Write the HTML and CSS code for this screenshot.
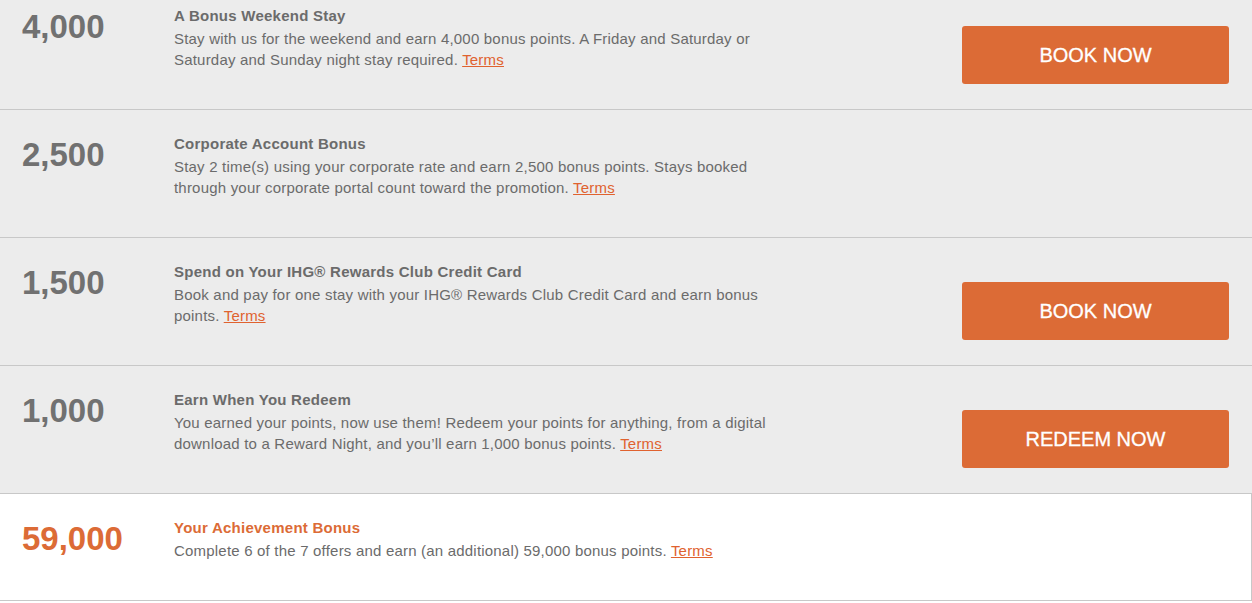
FILE: index.html
```html
<!DOCTYPE html>
<html>
<head>
<meta charset="utf-8">
<link rel="stylesheet" href="styles.css">
</head>
<body>
<div class="list">
  <div class="row">
    <div class="points">4,000</div>
    <div class="info">
      <div class="title">A Bonus Weekend Stay</div>
      <div class="desc">Stay with us for the weekend and earn 4,000 bonus points. A Friday and Saturday or Saturday and Sunday night stay required. <a href="#" class="terms">Terms</a></div>
    </div>
    <div class="action"><a href="#" class="btn">BOOK NOW</a></div>
  </div>
  <div class="row">
    <div class="points">2,500</div>
    <div class="info">
      <div class="title">Corporate Account Bonus</div>
      <div class="desc">Stay 2 time(s) using your corporate rate and earn 2,500 bonus points. Stays booked through your corporate portal count toward the promotion. <a href="#" class="terms">Terms</a></div>
    </div>
    <div class="action"></div>
  </div>
  <div class="row">
    <div class="points">1,500</div>
    <div class="info">
      <div class="title">Spend on Your IHG® Rewards Club Credit Card</div>
      <div class="desc">Book and pay for one stay with your IHG® Rewards Club Credit Card and earn bonus points. <a href="#" class="terms">Terms</a></div>
    </div>
    <div class="action"><a href="#" class="btn">BOOK NOW</a></div>
  </div>
  <div class="row">
    <div class="points">1,000</div>
    <div class="info">
      <div class="title">Earn When You Redeem</div>
      <div class="desc">You earned your points, now use them! Redeem your points for anything, from a digital download to a Reward Night, and you’ll earn 1,000 bonus points. <a href="#" class="terms">Terms</a></div>
    </div>
    <div class="action"><a href="#" class="btn">REDEEM NOW</a></div>
  </div>
  <div class="row row-achieve">
    <div class="points">59,000</div>
    <div class="info">
      <div class="title">Your Achievement Bonus</div>
      <div class="desc">Complete 6 of the 7 offers and earn (an additional) 59,000 bonus points. <a href="#" class="terms">Terms</a></div>
    </div>
    <div class="action"></div>
  </div>
</div>
</body>
</html>
```
FILE: styles.css
```css
html, body {
  margin: 0;
  padding: 0;
  background: #ffffff;
}
body {
  font-family: "Liberation Sans", Arial, Helvetica, sans-serif;
  color: #6b6b6b;
  overflow: hidden;
}
.list {
  margin-top: -18px;
}
.row {
  display: flex;
  align-items: flex-start;
  height: 127px;
  background: #ececec;
  border-bottom: 1px solid #c8c8c8;
}
.points {
  width: 152px;
  padding-left: 22px;
  padding-top: 28px;
  font-size: 33px;
  line-height: 33px;
  font-weight: bold;
  color: #717171;
}
.info {
  width: 604px;
  padding-top: 23px;
}
.title {
  font-size: 15px;
  line-height: 21px;
  font-weight: bold;
  letter-spacing: 0.25px;
  color: #6b6b6b;
  margin-bottom: 2px;
}
.desc {
  font-size: 15px;
  line-height: 21px;
  letter-spacing: 0.2px;
  color: #6b6b6b;
}
.terms {
  color: #e0622f;
  text-decoration: underline;
}
.action {
  flex: 1;
  display: flex;
  justify-content: flex-end;
  padding-top: 44px;
  padding-right: 23px;
}
.btn {
  display: flex;
  align-items: center;
  justify-content: center;
  width: 267px;
  height: 58px;
  background: #dc6b36;
  border-radius: 3px;
  color: #ffffff;
  font-size: 20px;
  -webkit-text-stroke: 0.3px #ffffff;
  text-decoration: none;
}
.row-achieve {
  background: #ffffff;
  height: 106px;
  border-right: 1px solid #c8c8c8;
}
.row-achieve .points,
.row-achieve .title {
  color: #dc6b36;
}
```
